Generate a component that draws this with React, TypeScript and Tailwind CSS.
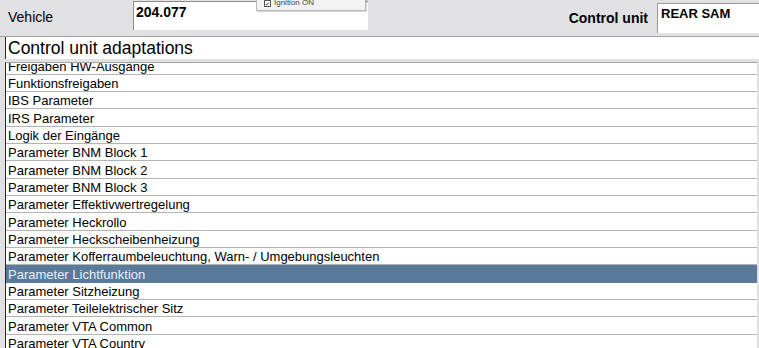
import React from 'react';

const rows = [
  'Freigaben HW-Ausgänge',
  'Funktionsfreigaben',
  'IBS Parameter',
  'IRS Parameter',
  'Logik der Eingänge',
  'Parameter BNM Block 1',
  'Parameter BNM Block 2',
  'Parameter BNM Block 3',
  'Parameter Effektivwertregelung',
  'Parameter Heckrollo',
  'Parameter Heckscheibenheizung',
  'Parameter Kofferraumbeleuchtung, Warn- / Umgebungsleuchten',
  'Parameter Lichtfunktion',
  'Parameter Sitzheizung',
  'Parameter Teilelektrischer Sitz',
  'Parameter VTA Common',
  'Parameter VTA Country',
];

const selected = 'Parameter Lichtfunktion';

export default function App() {
  return (
    <div className="relative w-[759px] h-[348px] overflow-hidden bg-[#e1e1e4] font-['Liberation_Sans',Arial,sans-serif] text-black">
      {/* Header */}
      <div className="relative flex h-[37px] border-b border-[#a4a4a7]">
        <div className="w-[133px] pl-[8px] pt-[9px] text-[14px] leading-[16px]">Vehicle</div>
        <div className="mt-[1px] h-[29px] w-[235px] bg-white border-l border-t border-[#8c8c8c] pl-[2px] pt-[2px] text-[14px] leading-[16px] font-bold">
          204.077
        </div>
        <div className="flex-1" />
        <div className="pt-[10px] pr-[9px] text-[14px] leading-[16px] font-bold">Control unit</div>
        <div className="mt-[3px] h-[30px] w-[102px] bg-white border-l border-t border-[#9a9a9a] pl-[3px] pt-[2px] text-[13px] leading-[16px] font-bold">
          REAR SAM
        </div>

        {/* clipped status popup */}
        <div className="absolute left-[256px] top-[-8px] flex h-[19px] w-[110px] items-end gap-[3px] bg-[#f3f3f4] border border-[#b8b8ba] pl-[7px] pb-[3px] shadow-[1px_1px_1px_rgba(0,0,0,0.15)]">
          <span className="flex h-[7px] w-[7px] items-center justify-center border border-[#555] bg-white text-[6px] leading-none">✓</span>
          <span className="text-[8px] leading-[8px] text-[#444]">Ignition ON</span>
        </div>
      </div>

      {/* Title box */}
      <div className="ml-[5px] h-[22px] bg-white border-l border-[#2a2a2a] pl-[2px] pt-[1px] text-[17.5px] leading-[21px]">
        Control unit adaptations
      </div>

      {/* List */}
      <div className="mt-[3px] ml-[5px] mr-[2px] h-[290px] overflow-hidden bg-white border-l border-t border-l-[#2a2a2a] border-t-[#a4a4a7]">
        <div className="-mt-[5.8px]">
          {rows.map((r) => (
            <div
              key={r}
              className={`h-[17.35px] border-b pl-[2px] pt-[1.4px] text-[13px] leading-[16px] whitespace-nowrap ${
                r === selected
                  ? 'bg-[#5a7a9c] border-[#5a7a9c] text-[#e8eef5]'
                  : 'border-[#b4b4b4]'
              }`}
            >
              {r}
            </div>
          ))}
        </div>
      </div>
    </div>
  );
}
